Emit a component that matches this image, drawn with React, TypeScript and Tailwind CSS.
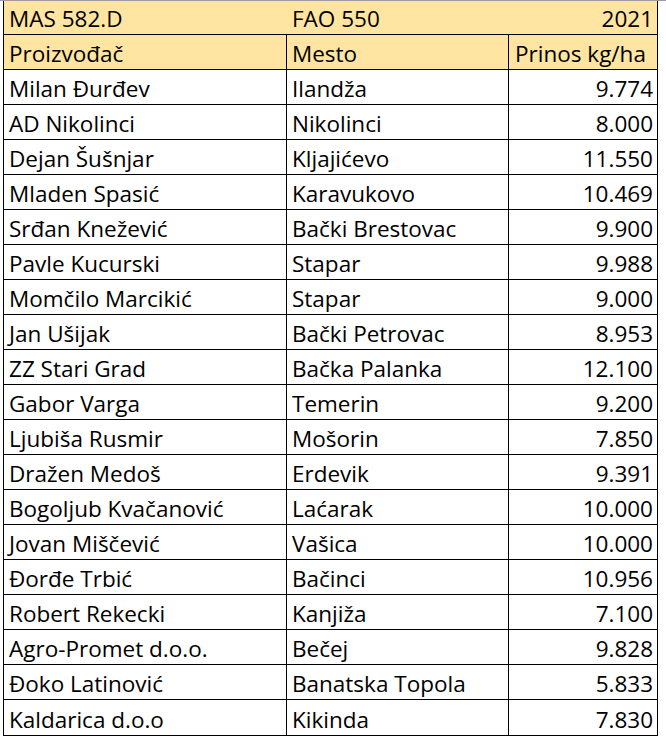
import React from "react";

const rows: [string, string, string][] = [
  ["Milan Đurđev", "Ilandža", "9.774"],
  ["AD Nikolinci", "Nikolinci", "8.000"],
  ["Dejan Šušnjar", "Kljajićevo", "11.550"],
  ["Mladen Spasić", "Karavukovo", "10.469"],
  ["Srđan Knežević", "Bački Brestovac", "9.900"],
  ["Pavle Kucurski", "Stapar", "9.988"],
  ["Momčilo Marcikić", "Stapar", "9.000"],
  ["Jan Ušijak", "Bački Petrovac", "8.953"],
  ["ZZ Stari Grad", "Bačka Palanka", "12.100"],
  ["Gabor Varga", "Temerin", "9.200"],
  ["Ljubiša Rusmir", "Mošorin", "7.850"],
  ["Dražen Medoš", "Erdevik", "9.391"],
  ["Bogoljub Kvačanović", "Laćarak", "10.000"],
  ["Jovan Miščević", "Vašica", "10.000"],
  ["Đorđe Trbić", "Bačinci", "10.956"],
  ["Robert Rekecki", "Kanjiža", "7.100"],
  ["Agro-Promet d.o.o.", "Bečej", "9.828"],
  ["Đoko Latinović", "Banatska Topola", "5.833"],
  ["Kaldarica d.o.o", "Kikinda", "7.830"],
];

const cols = "grid grid-cols-[283px_222px_148px]";

export default function App() {
  return (
    <div className="min-h-[739px] bg-white text-black font-['Open_Sans',sans-serif] text-[22.5px] leading-none">
      <div className="h-px bg-[#9c9c9c]" />
      <div className="ml-[3px] w-[655px] border-x border-b border-black">
        <div className={`${cols} h-[34px] bg-[#ffe5a1] border-b border-black`}>
          <div className="flex items-end pl-[5px] pb-[4px]">MAS 582.D</div>
          <div className="flex items-end pl-[5px] pb-[4px]">FAO 550</div>
          <div className="flex items-end justify-end pr-[4px] pb-[4px]">2021</div>
        </div>
        <div className={`${cols} h-[35px] bg-[#ffe5a1] border-b border-black`}>
          <div className="flex items-end pl-[5px] pb-[4px] border-r border-black">Proizvođač</div>
          <div className="flex items-end pl-[5px] pb-[4px] border-r border-black">Mesto</div>
          <div className="flex items-end pl-[6px] pb-[4px] whitespace-nowrap">Prinos kg/ha</div>
        </div>
        {rows.map(([name, place, value], i) => (
          <div
            key={name}
            className={`${cols} h-[35px] ${i < rows.length - 1 ? "border-b border-black" : ""}`}
          >
            <div className="flex items-end pl-[5px] pb-[4px] border-r border-black">{name}</div>
            <div className="flex items-end pl-[5px] pb-[4px] border-r border-black">{place}</div>
            <div className="flex items-end justify-end pr-[4px] pb-[4px]">{value}</div>
          </div>
        ))}
      </div>
    </div>
  );
}
